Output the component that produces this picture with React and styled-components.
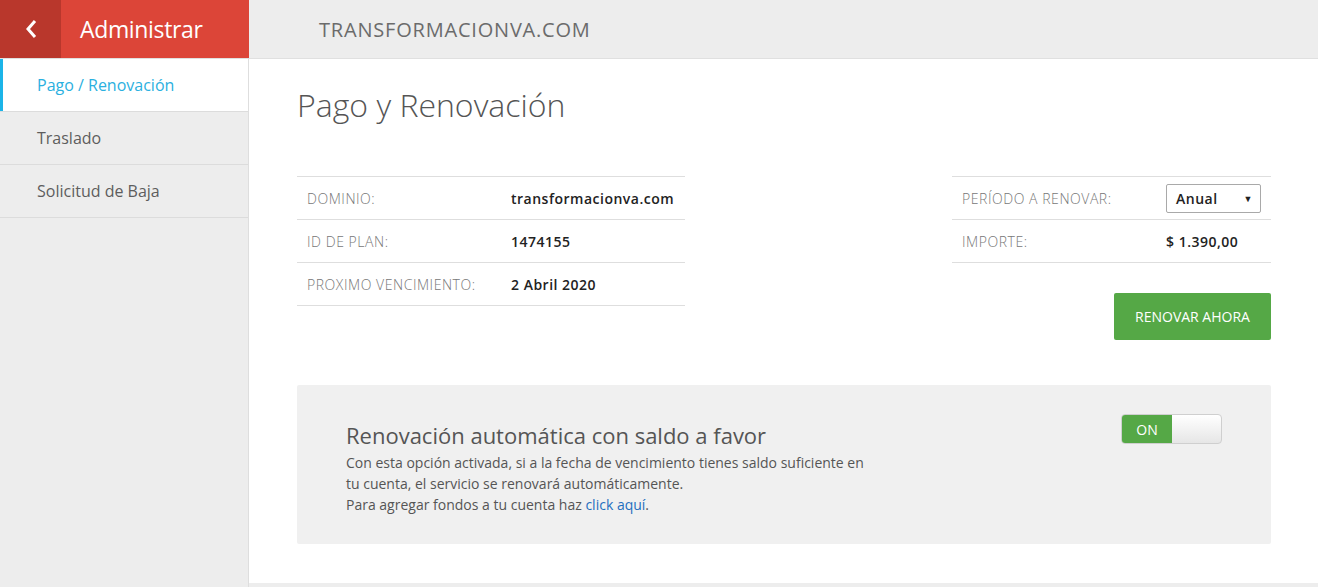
import React, { useState } from "react";
import styled, { createGlobalStyle } from "styled-components";

const Global = createGlobalStyle`
  html, body { margin: 0; padding: 0; }
  body {
    font-family: "Open Sans", "Liberation Sans", sans-serif;
    background: #ededed;
    color: #555;
  }
  * { box-sizing: border-box; }
`;

const Page = styled.div`
  width: 1318px;
  height: 587px;
  display: flex;
  flex-direction: column;
  overflow: hidden;
`;

const TopBar = styled.header`
  display: flex;
  height: 59px;
  flex-shrink: 0;
  background: #ededed;
  border-bottom: 1px solid #e0e0e0;
`;

const Brand = styled.div`
  width: 249px;
  display: flex;
  background: #dc4538;
  color: #fff;
`;

const BackButton = styled.button`
  width: 61px;
  border: 0;
  background: #b9372c;
  color: #fff;
  display: flex;
  align-items: center;
  justify-content: center;
  padding: 0;
  cursor: pointer;
`;

const BrandTitle = styled.h1`
  margin: 0;
  padding-left: 19px;
  display: flex;
  align-items: center;
  font-size: 23px;
  letter-spacing: -0.35px;
  font-weight: 400;
  padding-bottom: 1px;
`;

const Domain = styled.div`
  display: flex;
  align-items: center;
  padding-left: 70px;
  font-size: 20px;
  font-weight: 400;
  color: #6b6b6b;
  letter-spacing: 0.8px;
`;

const Body = styled.div`
  display: flex;
  flex: 1;
`;

const Sidebar = styled.nav`
  width: 249px;
  flex-shrink: 0;
  border-right: 1px solid #dedede;
  background: #ededed;
`;

const NavItem = styled.a`
  display: flex;
  align-items: center;
  height: 53px;
  padding-left: 37px;
  font-size: 16px;
  border-bottom: 1px solid #dcdcdc;
  color: ${(p) => (p.$active ? "#2bb0e0" : "#5d5d5d")};
  background: ${(p) => (p.$active ? "#fff" : "transparent")};
  box-shadow: ${(p) => (p.$active ? "inset 3px 0 0 #1bb4e8" : "none")};
  cursor: pointer;
`;

const Main = styled.main`
  flex: 1;
  height: 524px;
  background: #fff;
  padding: 26px 47px 0 48px;
`;

const Title = styled.h2`
  margin: 0;
  font-size: 32px;
  font-weight: 300;
  color: #555;
  line-height: 40px;
`;

const InfoRow = styled.div`
  display: flex;
  justify-content: space-between;
  margin-top: 51px;
`;

const Table = styled.div`
  width: ${(p) => p.$width}px;
  border-top: 1px solid #dedede;
`;

const Row = styled.div`
  display: flex;
  align-items: center;
  height: 43px;
  border-bottom: 1px solid #dedede;
  padding-left: 10px;
`;

const Label = styled.span`
  width: ${(p) => p.$width}px;
  font-size: 14px;
  font-weight: 300;
  color: #777;
  letter-spacing: 0.55px;
`;

const Value = styled.span`
  font-size: 14px;
  font-weight: 600;
  color: #222;
  letter-spacing: 0.5px;
`;

const Select = styled.div`
  width: 95px;
  height: 29px;
  border: 1px solid #a9a9a9;
  border-radius: 2px;
  display: flex;
  align-items: center;
  justify-content: space-between;
  padding: 0 7px 0 9px;
  font-size: 14px;
  font-weight: 600;
  color: #222;
  letter-spacing: 0.5px;
  margin-left: -6px;

  &::after {
    content: "▼";
    font-size: 9px;
    color: #222;
  }
`;

const RightCol = styled.div`
  display: flex;
  flex-direction: column;
  align-items: flex-end;
`;

const RenewButton = styled.button`
  margin-top: 30px;
  width: 157px;
  height: 47px;
  border: 0;
  border-radius: 2px;
  background: #55a846;
  color: #fff;
  font-family: inherit;
  font-size: 14px;
  font-weight: 400;
  cursor: pointer;
`;

const AutoBox = styled.section`
  margin-top: 45px;
  height: 159px;
  background: #f0f0f0;
  border-radius: 2px;
  display: flex;
  justify-content: space-between;
  padding: 35px 49px 0 49px;
`;

const AutoText = styled.div`
  width: 528px;
`;

const AutoTitle = styled.h3`
  margin: 0;
  font-size: 22px;
  font-weight: 400;
  color: #555;
  line-height: 30px;
`;

const AutoDesc = styled.p`
  margin: 2px 0 0;
  font-size: 14px;
  line-height: 21px;
  color: #555;

  a {
    color: #1f6fbf;
    text-decoration: none;
  }
`;

const Toggle = styled.button`
  margin-top: -6px;
  width: 101px;
  height: 30px;
  padding: 0;
  display: flex;
  border: 1px solid #cfcfcf;
  border-radius: 4px;
  overflow: hidden;
  background: linear-gradient(#ffffff, #e6e6e6);
  cursor: pointer;
`;

const ToggleOn = styled.span`
  width: 50px;
  height: 100%;
  background: #55a846;
  color: #fff;
  font-family: "Open Sans", sans-serif;
  font-size: 14px;
  display: flex;
  align-items: center;
  justify-content: center;
`;

export default function App() {
  const [active] = useState("pago");
  return (
    <>
      <Global />
      <Page>
        <TopBar>
          <Brand>
            <BackButton aria-label="Volver">
              <svg width="14" height="22" viewBox="0 0 14 22">
                <path d="M11 3 L4 11 L11 19" fill="none" stroke="#fff" strokeWidth="3" />
              </svg>
            </BackButton>
            <BrandTitle>Administrar</BrandTitle>
          </Brand>
          <Domain>TRANSFORMACIONVA.COM</Domain>
        </TopBar>
        <Body>
          <Sidebar>
            <NavItem $active={active === "pago"}>Pago / Renovación</NavItem>
            <NavItem>Traslado</NavItem>
            <NavItem>Solicitud de Baja</NavItem>
          </Sidebar>
          <Main>
            <Title>Pago y Renovación</Title>
            <InfoRow>
              <Table $width={388}>
                <Row>
                  <Label $width={204}>DOMINIO:</Label>
                  <Value>transformacionva.com</Value>
                </Row>
                <Row>
                  <Label $width={204}>ID DE PLAN:</Label>
                  <Value>1474155</Value>
                </Row>
                <Row>
                  <Label $width={204}>PROXIMO VENCIMIENTO:</Label>
                  <Value>2 Abril 2020</Value>
                </Row>
              </Table>
              <RightCol>
                <Table $width={319}>
                  <Row>
                    <Label $width={210}>PERÍODO A RENOVAR:</Label>
                    <Select>Anual</Select>
                  </Row>
                  <Row>
                    <Label $width={204}>IMPORTE:</Label>
                    <Value>$ 1.390,00</Value>
                  </Row>
                </Table>
                <RenewButton>RENOVAR AHORA</RenewButton>
              </RightCol>
            </InfoRow>
            <AutoBox>
              <AutoText>
                <AutoTitle>Renovación automática con saldo a favor</AutoTitle>
                <AutoDesc>
                  Con esta opción activada, si a la fecha de vencimiento tienes saldo suficiente en tu
                  cuenta, el servicio se renovará automáticamente.
                  <br />
                  Para agregar fondos a tu cuenta haz <a href="#">click aquí</a>.
                </AutoDesc>
              </AutoText>
              <Toggle>
                <ToggleOn>ON</ToggleOn>
              </Toggle>
            </AutoBox>
          </Main>
        </Body>
      </Page>
    </>
  );
}
